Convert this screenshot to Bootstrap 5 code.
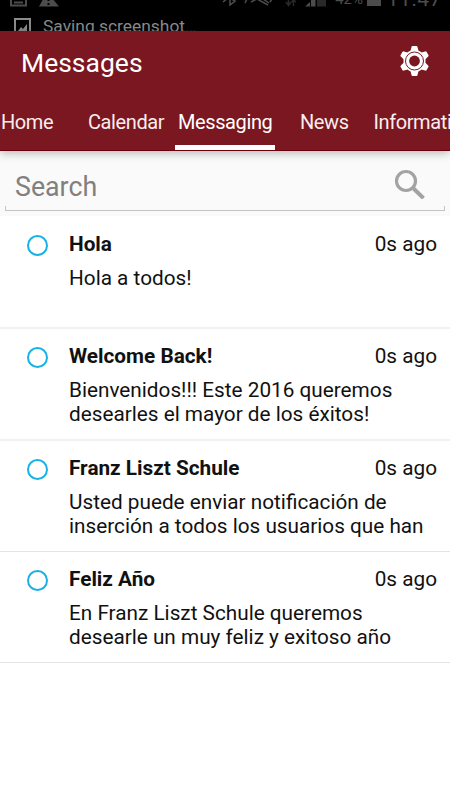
<!DOCTYPE html>
<html lang="es">
<head>
<meta charset="utf-8">
<meta name="viewport" content="width=device-width, initial-scale=1">
<title>Messages</title>
<link href="https://cdn.jsdelivr.net/npm/bootstrap@5.3.0/dist/css/bootstrap.min.css" rel="stylesheet">
<style>
body { font-family: Roboto, sans-serif; color: #111; height: 800px; font-size: 20.75px; }
.status { height: 31px; background: #000; color: #4c4c4c; }
.status-icons { height: 8px; }
.status-time { font-size: 21px; line-height: 24px; letter-spacing: .6px; right: 8px; bottom: -3px; }
.status-pct { font-size: 15px; line-height: 18px; right: 87px; bottom: 0; }
.saving { height: 17px; color: #8b8b8b; font-size: 17.4px; line-height: 21px; padding-left: 13px; }
.saving-dots { color: #333; }
.appbar { height: 120px; background: #7b1720; border-bottom: 1px solid #6c0008; box-shadow: 0 2px 9px rgba(0,0,0,.28); z-index: 2; }
.appbar-top { height: 63px; padding: 0 20px 0 21px; }
.gear { margin-bottom: 3px; }
.app-title { font-size: 26.5px; line-height: 32px; }
.tabs { height: 56px; }
.tabs .nav-link { color: #f7eeee; font-size: 20px; letter-spacing: -.4px; line-height: 57px; height: 56px; }
.tabs .nav-link.active { color: #fff; border-bottom: 5px solid #fff; }
.tab-home { width: 88px; padding-left: 1px; }
.tab-cal { width: 87px; }
.tab-msg { width: 100px; padding-left: 3px; }
.tab-news { width: 98.5px; padding-left: 25px; }
.search-area { height: 65px; background: #fafafa; padding: 0 5px; }
.search-box { height: 60px; }
.search-box .form-control { font-size: 26.75px; color: #808080; padding: 12px 10px 0; line-height: 48px; box-shadow: none; }
.search-box .form-control::placeholder { color: #808080; opacity: 1; }
.search-line { height: 5px; border: solid #c4c4c4; border-width: 0 1px 1px; margin-top: -5px; }
.message { height: 111px; padding: 13px 13px 0 27px; border-bottom: 1px solid #e4e4e4; }
.message:nth-child(1) { height: 113px; padding-top: 14px; border-bottom: 2px solid #f1f1f1; }
.message:nth-child(2) { height: 112px; border-bottom: 2px solid #f1f1f1; }
.ring { width: 21px; height: 21px; margin: 5.4px 21px 0 0; border: 2px solid #1bb0e4; }
.message-head { line-height: 28px; }
.message-text { line-height: 24px; margin-top: 8px; }
</style>
<script src="https://cdn.jsdelivr.net/npm/bootstrap@5.3.0/dist/js/bootstrap.bundle.min.js"></script>
</head>
<body class="bg-white overflow-hidden">
<div class="status overflow-hidden">
  <div class="status-icons d-flex align-items-end position-relative">
    <svg width="450" height="8" viewBox="0 0 450 8" fill="none" stroke="#4c4c4c">
      <path d="M11 -5V5.5H26V-5M14 2.5H23" stroke-width="2"/>
      <path d="M39 6.5L47 -8L59 6.5Z" fill="#4c4c4c" stroke="none"/>
      <path d="M48.500 -2V1M48.500 3V5" stroke="#000" stroke-width="2"/>
      <path d="M223 2L234 -7M224 -5L235 1L230 5V-8" stroke-width="1.500"/>
      <path d="M247 -1L245 3M251 2L257 -1L268 5M260 -3L269 3M270 2L272 -1" stroke-width="1.500"/>
      <path d="M288.500 -4V5M286 2L288.500 5.500L291 2M293.500 6V0M291.500 2L293.500 0L296 2" stroke="#292929" stroke-width="1.500"/>
      <path d="M305 6.500L310 2V6.500Z" fill="#4c4c4c" stroke="none"/>
      <path d="M311 0H315.500V6.500H311Z" fill="#4c4c4c" stroke="none"/>
      <path d="M317 -3H326V6.500H317Z" fill="#292929" stroke="none"/>
      <path d="M367 -8H381V6H367Z" fill="#4c4c4c" stroke="none"/>
    </svg>
    <span class="status-pct position-absolute">42%</span>
    <span class="status-time position-absolute">11:47</span>
  </div>
  <div class="saving d-flex mt-2">
    <svg class="flex-shrink-0" width="30" height="18" viewBox="0 0 30 18"><path d="M2 18V3H17V18" fill="none" stroke="#8b8b8b" stroke-width="2"/><path d="M5 15L8 11L10 13L14 8V18H5Z" fill="#8b8b8b"/></svg>
    <span>Saving screenshot<span class="saving-dots">…</span></span>
  </div>
</div>
<header class="appbar position-relative text-white">
  <div class="appbar-top d-flex align-items-center justify-content-between">
    <h1 class="app-title fw-normal mb-0">Messages</h1>
    <svg class="gear" width="30" height="32" viewBox="-14.500 -16 30 32">
      <g fill="#fff">
        <circle r="11"/>
        <path id="tooth" d="M-4 -10L-3 -14Q-2.800 -15 -2 -15H2Q2.800 -15 3 -14L4 -10Z"/>
        <use href="#tooth" transform="rotate(60)"/><use href="#tooth" transform="rotate(120)"/><use href="#tooth" transform="rotate(180)"/><use href="#tooth" transform="rotate(240)"/><use href="#tooth" transform="rotate(300)"/>
      </g>
      <circle r="9" fill="none" stroke="#7b1720" stroke-width="1"/>
      <circle r="5.400" fill="#7b1720"/>
    </svg>
  </div>
  <nav class="tabs nav flex-nowrap overflow-hidden text-nowrap">
    <a class="nav-link p-0 flex-shrink-0"><span class="tab-home d-block">Home</span></a>
    <a class="nav-link p-0 flex-shrink-0"><span class="tab-cal d-block">Calendar</span></a>
    <a class="nav-link p-0 flex-shrink-0 active"><span class="tab-msg d-block">Messaging</span></a>
    <a class="nav-link p-0 flex-shrink-0"><span class="tab-news d-block">News</span></a>
    <a class="nav-link p-0 flex-shrink-0">Information</a>
  </nav>
</header>
<main>
  <div class="search-area">
    <div class="search-box d-flex align-items-center">
      <input class="form-control border-0 bg-transparent rounded-0 h-100" type="text" placeholder="Search" aria-label="Search">
      <svg class="flex-shrink-0 me-3" width="36" height="36" viewBox="0 0 36 36" fill="none" stroke="#a3a3a3"><circle cx="13" cy="18" r="9.500" stroke-width="3.200"/><path d="M20.500 25.500L30.500 35.200" stroke-width="4"/></svg>
    </div>
    <div class="search-line"></div>
  </div>
  <section>
    <article class="message d-flex">
      <span class="ring rounded-circle flex-shrink-0"></span>
      <div class="flex-grow-1 text-nowrap">
        <div class="message-head d-flex justify-content-between"><strong>Hola</strong><span>0s ago</span></div>
        <p class="message-text mb-0">Hola a todos!</p>
      </div>
    </article>
    <article class="message d-flex">
      <span class="ring rounded-circle flex-shrink-0"></span>
      <div class="flex-grow-1 text-nowrap">
        <div class="message-head d-flex justify-content-between"><strong>Welcome Back!</strong><span>0s ago</span></div>
        <p class="message-text mb-0">Bienvenidos!!! Este 2016 queremos<br>desearles el mayor de los éxitos!</p>
      </div>
    </article>
    <article class="message d-flex">
      <span class="ring rounded-circle flex-shrink-0"></span>
      <div class="flex-grow-1 text-nowrap">
        <div class="message-head d-flex justify-content-between"><strong>Franz Liszt Schule</strong><span>0s ago</span></div>
        <p class="message-text mb-0">Usted puede enviar notificación de<br>inserción a todos los usuarios que han</p>
      </div>
    </article>
    <article class="message d-flex">
      <span class="ring rounded-circle flex-shrink-0"></span>
      <div class="flex-grow-1 text-nowrap">
        <div class="message-head d-flex justify-content-between"><strong>Feliz Año</strong><span>0s ago</span></div>
        <p class="message-text mb-0">En Franz Liszt Schule queremos<br>desearle un muy feliz y exitoso año</p>
      </div>
    </article>
  </section>
</main>
</body>
</html>
